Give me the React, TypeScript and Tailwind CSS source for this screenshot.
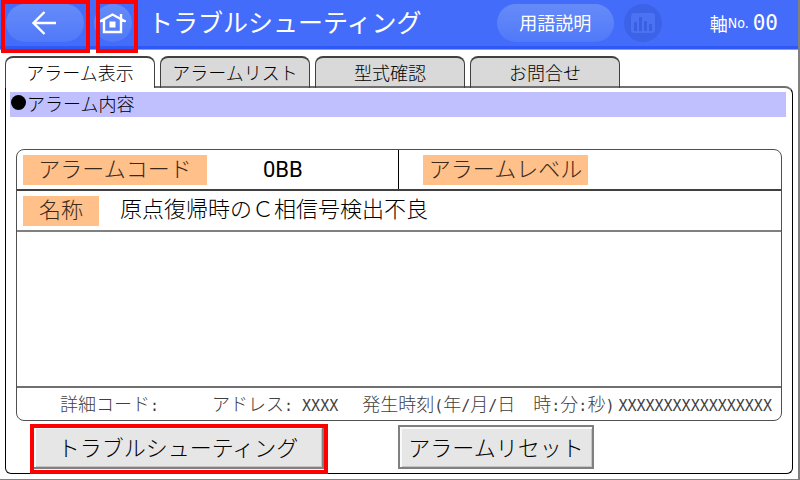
import { useState, type ReactNode } from "react";

const tabs = ["アラーム表示", "アラームリスト", "型式確認", "お問合せ"];

function Half({ children }: { children: ReactNode }) {
  return <span className="font-['DejaVu_Sans_Mono',monospace] text-[15px] font-normal">{children}</span>;
}

function Highlight({ className }: { className: string }) {
  return <span aria-hidden="true" className={`pointer-events-none absolute z-10 border-4 border-[#ff0000] ${className}`} />;
}

function Label({ children, className }: { children: ReactNode; className: string }) {
  return (
    <span className={`flex h-[30px] shrink-0 items-center justify-center bg-[#ffc08a] pb-1 text-[#3a2a1c] ${className}`}>
      {children}
    </span>
  );
}

function Header() {
  return (
    <header className="flex h-[50px] items-start border-b border-[#9a9ea8] bg-[#446cfa] pt-1 pl-1.5 text-white shadow-[inset_0_-3px_0_#2f58f4]">
      <button type="button" aria-label="戻る" className="relative flex h-[38px] w-[78px] shrink-0 items-center justify-center rounded-full bg-linear-to-b from-[#668bf8] to-[#5079f9]">
        <svg width="26" height="24" viewBox="0 0 26 24" fill="none" stroke="currentColor" strokeWidth="2.4">
          <path d="M24 12H1M12.500 1L1.500 12l11 11" />
        </svg>
        <Highlight className="-top-1 -left-[5px] h-[53px] w-[89px]" />
      </button>
      <button type="button" aria-label="ホーム" className="relative ml-2.5 flex size-[38px] shrink-0 items-center justify-center rounded-full bg-linear-to-b from-[#668bf8] to-[#5079f9]">
        <svg width="26" height="22" viewBox="0 0 26 22" fill="none" stroke="currentColor" strokeWidth="2.4">
          <path d="M4 8V20H21V8" />
          <path d="M0 9.500L12.500 2.500L25.500 9.500" />
          <path d="M21 8.500V2" />
          <path d="M0 9.200H4M21 9.200H26" strokeWidth="1.600" />
          <rect x="9.500" y="9.500" width="6" height="6" fill="currentColor" stroke="none" />
        </svg>
        <Highlight className="-top-1 left-0.5 h-[53px] w-[42px]" />
      </button>
      <h1 className="ml-4 text-[25px] leading-[34px] whitespace-nowrap">トラブルシューティング</h1>
      <div className="ml-auto flex items-center pr-5">
        <button type="button" className="h-[38px] w-[117px] rounded-full bg-linear-to-b from-[#668bf8] to-[#5079f9] pb-0.5 text-lg">
          用語説明
        </button>
        <button type="button" aria-label="グラフ" className="ml-2.5 flex size-[38px] items-center justify-center rounded-full bg-[#3c62e8]">
          <svg width="24" height="20" viewBox="0 0 24 20">
            <rect width="24" height="20" rx="3" fill="#4a72f2" />
            <path d="M3 9h3v9H3zM8 4h3v14H8zM13 8h3v10h-3zM18 11h3v7h-3z" fill="#3a5fe0" />
          </svg>
        </button>
        <p className="ml-12 flex items-center text-lg">
          軸
          <span className="font-['Liberation_Sans_Narrow','DejaVu_Sans_Condensed',sans-serif] text-sm">No.</span>
          <span className="ml-1 font-['DejaVu_Sans_Mono',monospace] text-[21px]">00</span>
        </p>
      </div>
    </header>
  );
}

export default function App() {
  const [active, setActive] = useState(0);
  const actionStyle =
    "h-11 border-2 border-[#808080] bg-[#e6e6e6] pb-0.5 text-[22px] shadow-[inset_1px_1px_0_1px_#fafafa,inset_-1px_-1px_0_#c4c4c4]";

  return (
    <div className="flex min-h-screen flex-col border-r-2 border-b border-[#808080] bg-white font-['Noto_Sans_CJK_JP',sans-serif] text-black">
      <Header />
      <main className="flex grow flex-col pt-1.5 pr-[5px] pb-[5px] pl-[5px]">
        <div role="tablist" className="flex gap-[5px] text-lg font-light">
          {tabs.map((tab, i) => (
            <button
              key={tab}
              type="button"
              role="tab"
              aria-selected={active === i}
              onClick={() => setActive(i)}
              className={`relative -mb-0.5 h-8 w-[150px] rounded-t-lg border border-t-2 border-b-0 border-[#404040] pb-1.5 ${active === i ? "z-10 bg-white" : "bg-[#d9d9d9] shadow-[inset_0_-2px_0_#707070]"}`}
            >
              {tab}
            </button>
          ))}
        </div>
        <section className="flex grow flex-col rounded-tr-lg rounded-b-md border border-t-2 border-black border-t-[#707070] px-1 pt-1">
          <h2 className="mr-0.5 flex h-[25px] items-center bg-[#c0c0ff] pb-1 pl-px text-lg font-light">
            <span className="mr-px size-[15px] rounded-full bg-black" />
            アラーム内容
          </h2>
          <div className="mt-8 mr-1.5 ml-1.5 flex grow flex-col rounded-lg border border-[#505050] text-[22px] font-light">
            <div className="flex h-[41px] border-b-2 border-[#404040]">
              <div className="flex w-1/2 items-center border-r border-black pl-1.5">
                <Label className="w-[184px]">アラームコード</Label>
                <span className="ml-14 font-[Roboto,sans-serif] font-normal">0BB</span>
              </div>
              <div className="flex items-center pl-6">
                <Label className="w-[165px]">アラームレベル</Label>
              </div>
            </div>
            <div className="flex h-[41px] items-center border-b-2 border-[#808080] pl-1.5">
              <Label className="w-[76px]">名称</Label>
              <span className="ml-[21px] pb-1.5 whitespace-nowrap">原点復帰時のＣ相信号検出不良</span>
            </div>
            <div className="grow" />
            <div className="flex h-[34px] items-center border-t-2 border-[#707070] pr-2 pl-[43px] text-lg whitespace-nowrap text-[#404040]">
              <span>詳細コード<Half>:</Half></span>
              <span className="ml-[53px]">アドレス<Half>: XXXX</Half></span>
              <span className="ml-6">発生時刻<Half>(</Half>年<Half>/</Half>月<Half>/</Half>日</span>
              <span className="ml-[18px]">時<Half>:</Half>分<Half>:</Half>秒<Half>)</Half></span>
              <span className="ml-1"><Half>XXXXXXXXXXXXXXXXX</Half></span>
            </div>
          </div>
          <div className="mt-1 mb-1 flex gap-[74px] pl-5 font-light">
            <div className="relative pl-0.5">
              <button type="button" className={`${actionStyle} w-[292px]`}>トラブルシューティング</button>
              <Highlight className="-top-px left-0 h-[50px] w-[298px]" />
            </div>
            <button type="button" className={`${actionStyle} w-[196px]`}>アラームリセット</button>
          </div>
        </section>
      </main>
    </div>
  );
}
